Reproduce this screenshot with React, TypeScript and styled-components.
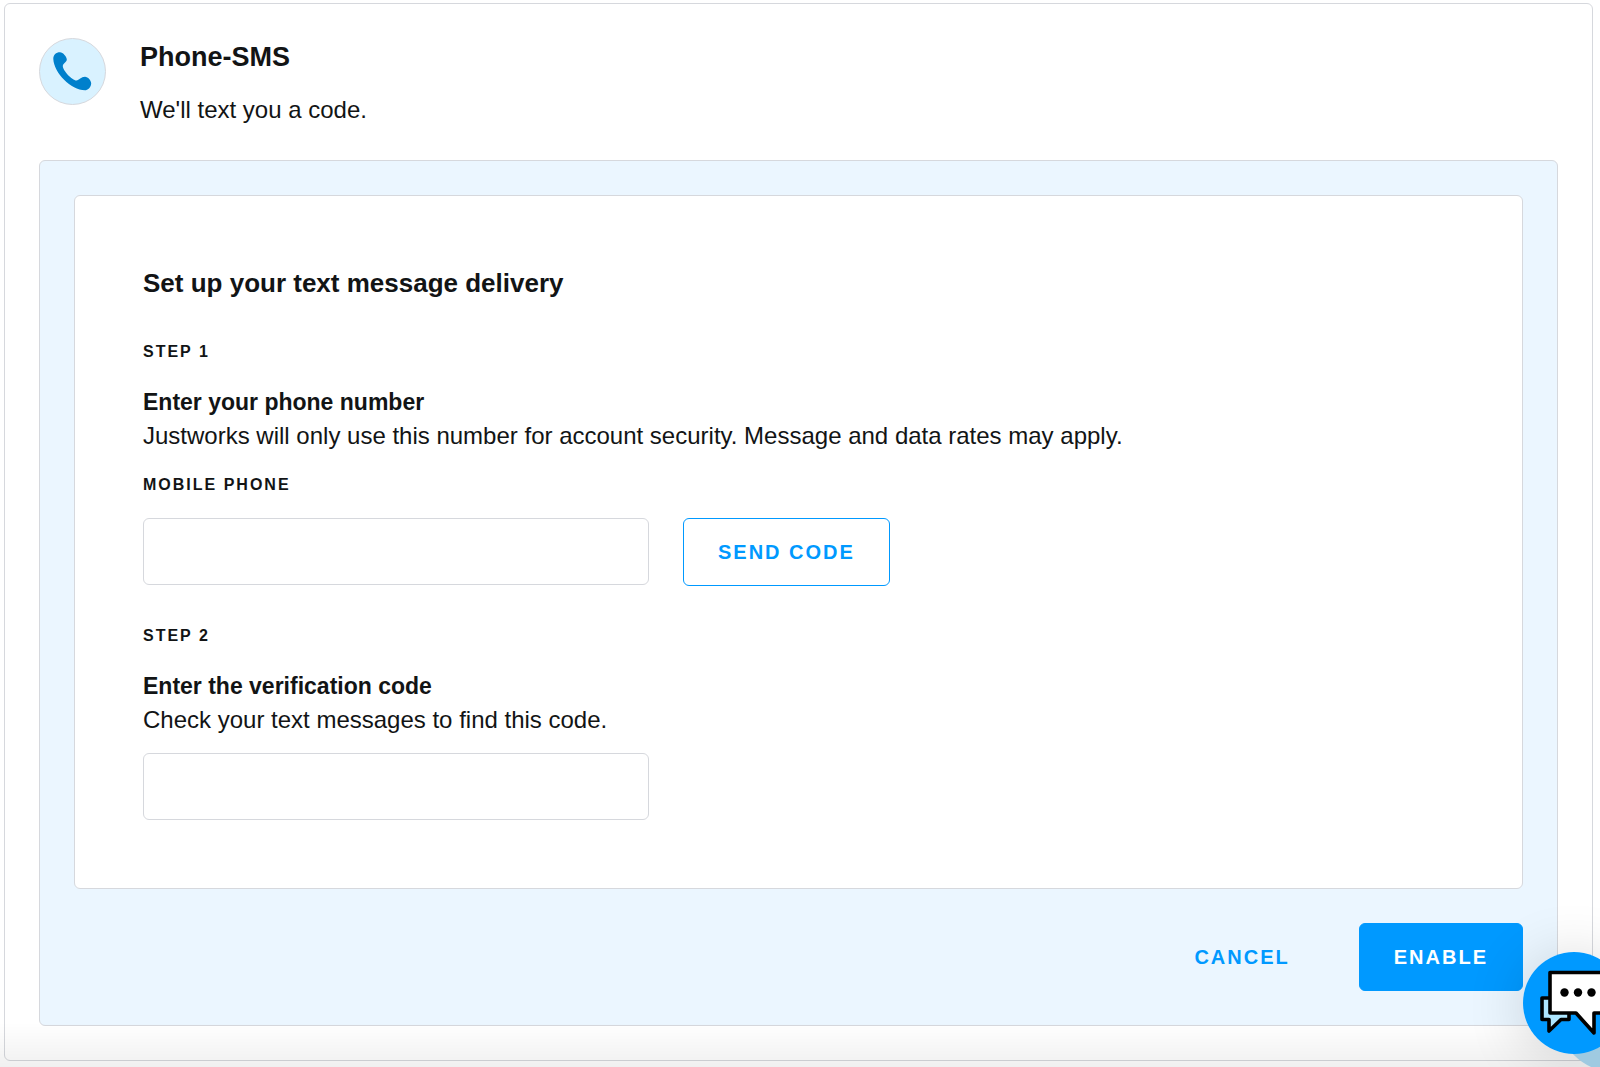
import React from "react";
import styled, { createGlobalStyle } from "styled-components";

const color = {
  ink: "#121415",
  line: "#d6d8dd",
  blue: "#0099ff",
  tint: "#ebf6ff",
  badge: "#d9f2ff",
  phone: "#0080cc",
};

const GlobalStyle = createGlobalStyle`
  *, *::before, *::after { box-sizing: border-box; }
  body {
    margin: 0;
    background: #fff;
    color: ${color.ink};
    font-family: "Liberation Sans", Arial, sans-serif;
    overflow-x: hidden;
  }
`;

const Page = styled.main`
  padding: 3px 7px 3px 4px;
`;

const Card = styled.section`
  border: 1px solid ${color.line};
  border-radius: 6px;
  padding: 34px;
  background: #fff;
`;

const Header = styled.header`
  display: flex;
  gap: 34px;
  margin-bottom: 34px;
`;

const IconBadge = styled.div`
  flex: none;
  width: 67px;
  height: 67px;
  border: 1px solid ${color.line};
  border-radius: 50%;
  background: ${color.badge};
`;

const Title = styled.h2`
  margin: 0 0 17px;
  font-size: 27px;
  line-height: 38px;
`;

const Text = styled.p`
  margin: 0;
  font-size: 24px;
  line-height: 33px;
`;

const Panel = styled.form`
  border: 1px solid ${color.line};
  border-radius: 6px;
  padding: 34px;
  background: ${color.tint};
`;

const Sheet = styled.div`
  border: 1px solid ${color.line};
  border-radius: 6px;
  padding: 68px;
  background: #fff;
`;

const SheetTitle = styled.h3`
  margin: 0 0 34px;
  font-size: 26px;
  line-height: 38px;
`;

const Step = styled.section`
  & + & { margin-top: 34px; }
`;

const capsText = `
  font-size: 16px;
  line-height: 32px;
  font-weight: 700;
  letter-spacing: 2px;
  text-transform: uppercase;
`;

const StepName = styled.div`
  ${capsText}
  margin-bottom: 17px;
`;

const StepTitle = styled.h4`
  margin: 0;
  font-size: 23px;
  line-height: 34px;
`;

const FieldLabel = styled.label`
  ${capsText}
  display: block;
  margin: 17px 0;
`;

const FieldRow = styled.div`
  display: flex;
  flex-wrap: wrap;
  gap: 34px;
`;

const Input = styled.input`
  display: block;
  width: 506px;
  max-width: 100%;
  height: 67px;
  padding: 0 17px;
  border: 1px solid ${color.line};
  border-radius: 6px;
  background: #fff;
  color: inherit;
  font: 24px "Liberation Sans", Arial, sans-serif;
`;

const CodeInput = styled(Input)`
  margin-top: 17px;
`;

type Look = "outline" | "plain" | "solid";

const Button = styled.button<{ $look: Look }>`
  height: 68px;
  padding: 0 34px;
  border: 1px solid ${(p) => (p.$look === "plain" ? "transparent" : color.blue)};
  border-radius: 6px;
  background: ${(p) => (p.$look === "solid" ? color.blue : "transparent")};
  color: ${(p) => (p.$look === "solid" ? "#fff" : color.blue)};
  font: 700 20px "Liberation Sans", Arial, sans-serif;
  letter-spacing: 2px;
  text-transform: uppercase;
  cursor: pointer;
`;

const Actions = styled.div`
  display: flex;
  justify-content: flex-end;
  gap: 34px;
  margin-top: 34px;
`;

const BottomFade = styled.div`
  position: fixed;
  inset: auto 0 0 0;
  height: 44px;
  background: linear-gradient(rgba(0, 0, 0, 0), rgba(0, 0, 0, 0.06));
  pointer-events: none;
`;

const ChatHalo = styled.div`
  position: fixed;
  right: -70px;
  bottom: -5px;
  width: 112px;
  height: 112px;
  border-radius: 50%;
  background: #9fcae1;
`;

const ChatShadow = styled.div`
  position: fixed;
  right: -25px;
  bottom: 13px;
  width: 102px;
  height: 102px;
  border-radius: 50%;
  box-shadow: 0 4px 60px rgba(0, 0, 0, 0.16);
  pointer-events: none;
`;

const ChatButton = styled.button`
  position: fixed;
  right: -25px;
  bottom: 13px;
  width: 102px;
  height: 102px;
  padding: 0;
  border: 0;
  border-radius: 50%;
  background: ${color.blue};
  cursor: pointer;
`;

function PhoneIcon() {
  return (
    <svg width="65" height="65" viewBox="0 0 65 65" aria-hidden="true">
      <path
        d="M20 13.3 C23 13.3 26.8 18 26.8 20.5 C26.8 23 22.8 24.5 22.8 27 C22.8 31.5 32 41.5 36.5 41.5 C39 41.5 41 37.8 45 37.8 C48 37.8 51.2 41.5 51.2 44.5 C51 48.5 47.5 51.3 45 51.3 C31 51 14 34 13.3 20 C13.3 16 16 13.3 20 13.3 Z"
        fill={color.phone}
      />
    </svg>
  );
}

function ChatIcon() {
  return (
    <svg width="102" height="102" viewBox="0 0 102 102" aria-hidden="true">
      <g stroke="#000" strokeWidth="3.6" strokeLinejoin="round">
        <path d="M19 46 H46 V67.5 H38 L26 79 V67.5 H19 Z" fill="#aee6ff" />
        <path d="M27 20.5 H84 V61 H71 V81 L53 61 H27 Z" fill="#fff" />
      </g>
      <circle cx="41.5" cy="40.5" r="4.2" />
      <circle cx="55" cy="40.5" r="4.2" />
      <circle cx="68.5" cy="40.5" r="4.2" />
    </svg>
  );
}

export default function App() {
  return (
    <>
      <GlobalStyle />
      <Page>
        <Card>
          <Header>
            <IconBadge>
              <PhoneIcon />
            </IconBadge>
            <div>
              <Title>Phone-SMS</Title>
              <Text>We'll text you a code.</Text>
            </div>
          </Header>
          <Panel onSubmit={(e) => e.preventDefault()}>
            <Sheet>
              <SheetTitle>Set up your text message delivery</SheetTitle>
              <Step>
                <StepName>Step 1</StepName>
                <StepTitle>Enter your phone number</StepTitle>
                <Text>
                  Justworks will only use this number for account security. Message and data rates
                  may apply.
                </Text>
                <FieldLabel htmlFor="mobile-phone">Mobile phone</FieldLabel>
                <FieldRow>
                  <Input id="mobile-phone" type="tel" />
                  <Button type="button" $look="outline">
                    Send code
                  </Button>
                </FieldRow>
              </Step>
              <Step>
                <StepName>Step 2</StepName>
                <StepTitle>
                  <label htmlFor="verification-code">Enter the verification code</label>
                </StepTitle>
                <Text>Check your text messages to find this code.</Text>
                <CodeInput id="verification-code" type="text" inputMode="numeric" />
              </Step>
            </Sheet>
            <Actions>
              <Button type="button" $look="plain">
                Cancel
              </Button>
              <Button type="submit" $look="solid">
                Enable
              </Button>
            </Actions>
          </Panel>
        </Card>
      </Page>
      <BottomFade />
      <ChatShadow />
      <ChatHalo />
      <ChatButton type="button" aria-label="Open chat">
        <ChatIcon />
      </ChatButton>
    </>
  );
}
